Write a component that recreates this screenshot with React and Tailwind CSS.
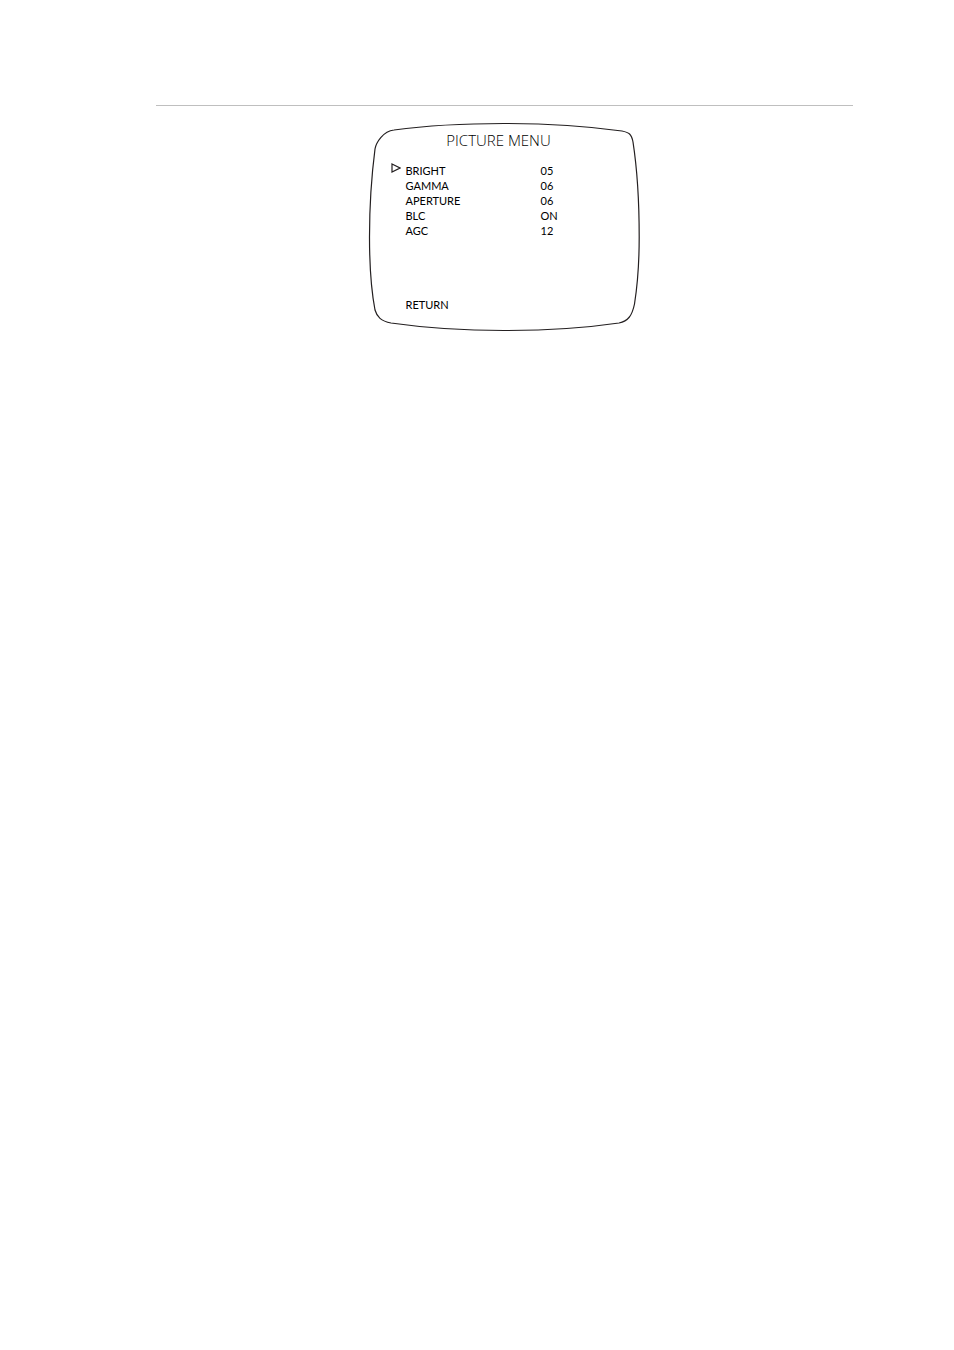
import React from 'react';

const settings = [
  { name: 'BRIGHT', value: '05' },
  { name: 'GAMMA', value: '06' },
  { name: 'APERTURE', value: '06' },
  { name: 'BLC', value: 'ON' },
  { name: 'AGC', value: '12' },
];

const ScreenOutline = () => (
  <svg
    className="absolute inset-0 w-full h-full"
    viewBox="0 0 272 210"
    fill="none"
    stroke="#231f20"
    strokeWidth="1.2"
    aria-hidden="true"
  >
    <path d="M26 8 C59 3.500 97 1.500 136 1.500 C178 1.500 218 4 254 9 C261 10.500 263.500 12 265 20 C269 46 271.200 80 271.200 115 C271.200 142 269.500 163 266.500 182 C264 194 260 199 251 201 C217 206 178 208.500 136 208.500 C96 208.500 58 206 23 201 C13 199 9 195 7 188 C3 167 1.500 142 1.500 115 C1.500 84 3.500 54 7 27 C8 21 15 9 26 8 Z" />
  </svg>
);

const Pointer = () => (
  <svg
    className="w-[10px] h-[10px]"
    viewBox="0 0 10 10"
    fill="none"
    stroke="#231f20"
    strokeWidth="1.2"
    aria-hidden="true"
  >
    <path d="M1 1 L9 5 L1 9 Z" />
  </svg>
);

const PictureMenu = () => {
  return (
    <section className="relative w-[272px] h-[210px] pt-2 text-black">
      <ScreenOutline />
      <div className="relative">
        <h1 className="pr-2.5 text-center font-['Open_Sans',sans-serif] text-[15px] leading-5 font-light">
          PICTURE MENU
        </h1>

        <table className="mt-[13px] ml-[23px] text-[11px] leading-[15px]">
          <tbody>
            {settings.map((item, index) => (
              <tr key={item.name}>
                <td className="w-[15px] p-0 align-top">{index === 0 && <Pointer />}</td>
                <th scope="row" className="w-[135px] p-0 text-left font-normal">
                  {item.name}
                </th>
                <td className="p-0">{item.value}</td>
              </tr>
            ))}
          </tbody>
        </table>

        <button type="button" className="block mt-[59px] ml-[38px] text-[11px] leading-[15px]">
          RETURN
        </button>
      </div>
    </section>
  );
};

const App = () => {
  return (
    <main className="min-h-screen bg-white pt-[105px] pl-[156px] pr-[101px] font-['Lato',sans-serif]">
      <hr className="border-t border-[#bfbfbf]" />
      <div className="flex justify-center mt-4 pr-0.5">
        <PictureMenu />
      </div>
    </main>
  );
};

export default App;
